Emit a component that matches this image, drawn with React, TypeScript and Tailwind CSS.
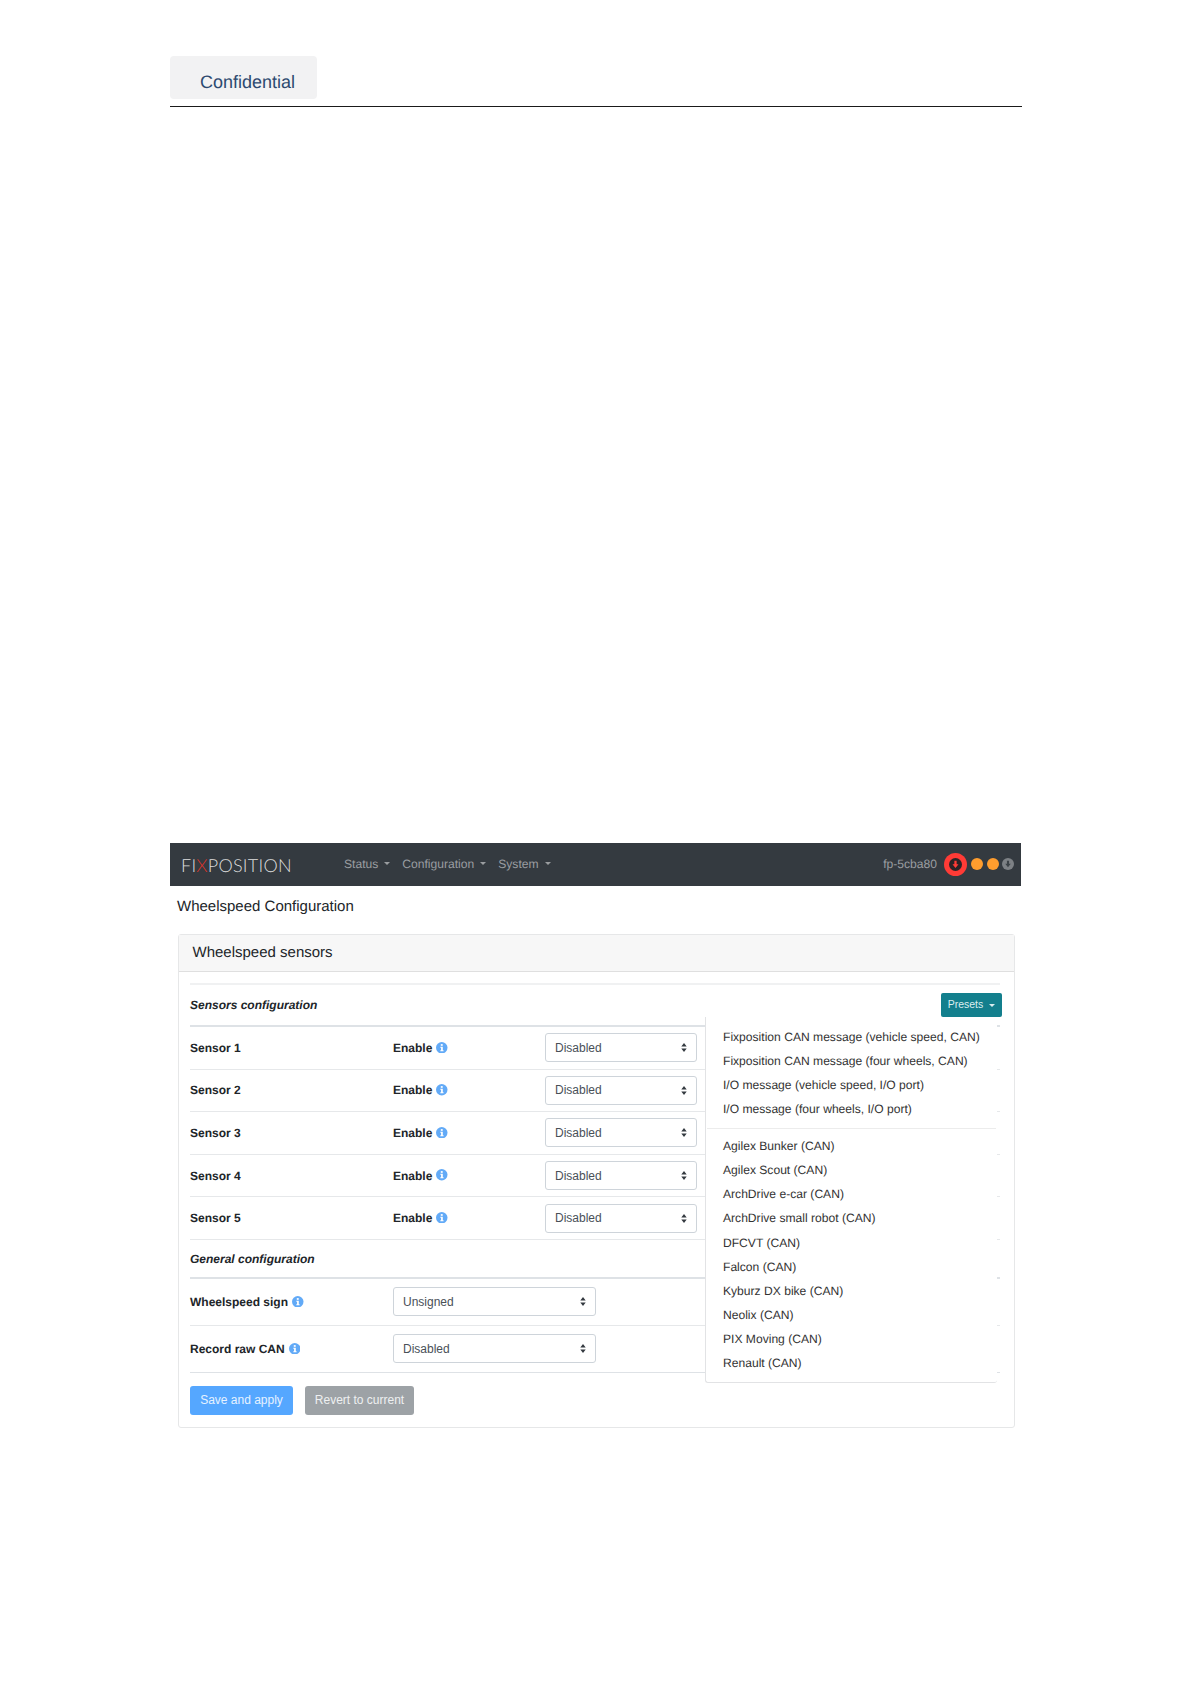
function Caret({ color = 'border-t-[#9a9da0]' }: { color?: string }) {
  return <span className={`ml-[6px] inline-block h-0 w-0 border-x-[3.5px] border-t-[3.5px] border-x-transparent ${color}`} />
}

function Info() {
  return (
    <svg viewBox="0 0 12 12" className="-mt-[1px] h-[11.5px] w-[11.5px] shrink-0">
      <circle cx="6" cy="6" r="6" fill="#62aaf7" />
      <rect x="5" y="2.2" width="2" height="1.8" fill="#fff" />
      <path d="M4.5 5h2.6v3.6h.8v1H4.5v-1h.8V6h-.8z" fill="#fff" />
    </svg>
  )
}

function DownDot({ className, fill, arrow }: { className: string; fill: string; arrow: string }) {
  return (
    <svg viewBox="0 0 16 16" className={className}>
      <circle cx="8" cy="8" r="8" fill={fill} />
      <path d="M6.6 3.5h2.8v4.2h2.3L8 12.2 4.3 7.7h2.3z" fill={arrow} />
    </svg>
  )
}

function Select({ value, width }: { value: string; width: string }) {
  return (
    <div className={`relative h-[29px] ${width}`}>
      <select
        defaultValue={value}
        className="h-full w-full appearance-none rounded-[3px] border border-[#ced4da] bg-white pl-[9px] text-[12px] font-normal text-[#495057]"
      >
        <option>{value}</option>
      </select>
      <svg viewBox="0 0 6 10" className="pointer-events-none absolute right-[10px] top-[10px] h-[9px] w-[6px]">
        <path d="M3 0l3 4H0zM3 10L0 6h6z" fill="#343a40" />
      </svg>
    </div>
  )
}

const sensors = ['Sensor 1', 'Sensor 2', 'Sensor 3', 'Sensor 4', 'Sensor 5']

const presets = [
  'Fixposition CAN message (vehicle speed, CAN)',
  'Fixposition CAN message (four wheels, CAN)',
  'I/O message (vehicle speed, I/O port)',
  'I/O message (four wheels, I/O port)',
]

const vehicles = [
  'Agilex Bunker (CAN)',
  'Agilex Scout (CAN)',
  'ArchDrive e-car (CAN)',
  'ArchDrive small robot (CAN)',
]

const vehicles2 = [
  'DFCVT (CAN)',
  'Falcon (CAN)',
  'Kyburz DX bike (CAN)',
  'Neolix (CAN)',
  'PIX Moving (CAN)',
  'Renault (CAN)',
]

export default function App() {
  return (
    <div className="min-h-[1685px] w-[1192px] bg-white pl-[170px] pt-[56px] font-['Liberation_Sans',sans-serif] text-[#212529] [text-rendering:geometricPrecision]">
      <div className="h-[51px] w-[852px] border-b border-[#1a1a1a]">
        <div className="flex h-[43px] w-[147px] items-center rounded-[4px] bg-[#f2f2f3] pl-[30px] pt-[9px] text-[18px] text-[#2d4a70]">
          Confidential
        </div>
      </div>

      <nav className="mt-[736px] flex h-[43px] w-[851px] items-center bg-[#343a40] pl-[11px] text-[12.1px] text-[#9a9da0]">
        <div className="w-[163px] pt-[2px] font-['Lato',sans-serif] text-[18px] font-light tracking-[0.25px] text-[#dedede]">
          FI<span className="font-light text-[#d9342b]">X</span>POSITION
        </div>
        <div className="flex items-center gap-[12px] pb-[1px]">
          {['Status', 'Configuration', 'System'].map((item) => (
            <span key={item} className="flex items-center">
              {item}
              <Caret />
            </span>
          ))}
        </div>
        <div className="ml-auto flex items-center pb-[1px] pr-[7px]">
          <span className="mr-[7px]">fp-5cba80</span>
          <span className="mr-[4px] flex h-[23px] w-[23px] items-center justify-center rounded-full bg-[#ff3b36]">
            <DownDot className="h-[13px] w-[13px]" fill="#2b2326" arrow="#ff3b36" />
          </span>
          <span className="mr-[4px] h-[12px] w-[12px] rounded-full bg-[#ff9d2e]" />
          <span className="mr-[3px] h-[12px] w-[12px] rounded-full bg-[#ff9d2e]" />
          <DownDot className="h-[12px] w-[12px]" fill="#7d8185" arrow="#3c4247" />
        </div>
      </nav>

      <h1 className="ml-[7px] h-[48px] pt-[10px] text-[15px] leading-[22px]">Wheelspeed Configuration</h1>

      <section className="ml-[8px] h-[494px] w-[837px] rounded-[3px] border border-[#e6e7e8]">
        <h2 className="flex h-[37px] items-center border-b border-[#dfdfdf] bg-[#f7f7f7] pl-[13.5px] text-[15px]">
          Wheelspeed sensors
        </h2>

        <div className="ml-[11px] mt-[11px] w-[810px] text-[12px]">
          <div className="w-[810px] border-t-2 border-[#f0f1f2]" />

          <div className="flex h-[42px] items-center justify-between border-b-2 border-[#dee2e6]">
            <span className="font-bold italic">Sensors configuration</span>
            <div className="relative -mr-[2px]">
              <button className="flex h-[24px] w-[61px] items-center justify-center rounded-[2px] bg-[#137f8d] text-[10.5px] text-[#dbeef0]">
                Presets
                <Caret color="border-t-[#dbeef0]" />
              </button>
              <div className="absolute right-[5px] top-full z-10 w-[292px] rounded-b-[3px] border-b border-l border-[#e2e3e5] bg-white pb-[7px] pt-[8px] text-[12.1px] text-[#333]">
                {presets.map((p) => (
                  <div key={p} className="flex h-[24px] items-center pl-[17px]">{p}</div>
                ))}
                <div className="mx-[1px] mb-[5px] mt-[7px] border-t border-[#ececec]" />
                {vehicles.map((v) => (
                  <div key={v} className="flex h-[24px] items-center pl-[17px]">{v}</div>
                ))}
                <div className="h-[1px]" />
                {vehicles2.map((v) => (
                  <div key={v} className="flex h-[24px] items-center pl-[17px]">{v}</div>
                ))}
              </div>
            </div>
          </div>

          {sensors.map((s) => (
            <div key={s} className="flex h-[42.6px] items-center border-b border-[#e6e8ea] font-bold">
              <span className="w-[203px]">{s}</span>
              <span className="flex w-[152px] items-center gap-[4px]">
                Enable
                <Info />
              </span>
              <Select value="Disabled" width="w-[152px]" />
            </div>
          ))}

          <div className="flex h-[39px] items-center border-b-2 border-[#dee2e6] pt-[1px] font-bold italic">
            General configuration
          </div>

          <div className="flex h-[47px] items-center border-b border-[#e6e8ea] font-bold">
            <span className="flex w-[203px] items-center gap-[4px]">
              Wheelspeed sign
              <Info />
            </span>
            <Select value="Unsigned" width="w-[203px]" />
          </div>
          <div className="flex h-[47px] items-center border-b border-[#dee2e6] font-bold">
            <span className="flex w-[203px] items-center gap-[4px]">
              Record raw CAN
              <Info />
            </span>
            <Select value="Disabled" width="w-[203px]" />
          </div>

          <div className="mt-[13px] flex gap-[12px]">
            <button className="h-[29px] w-[103px] rounded-[3px] pb-[1px] bg-[#55a7ff] text-[#e6f2ff]">Save and apply</button>
            <button className="h-[29px] w-[109px] rounded-[3px] pb-[1px] bg-[#9da2a6] text-[#eef0f1]">Revert to current</button>
          </div>
        </div>
      </section>
    </div>
  )
}
